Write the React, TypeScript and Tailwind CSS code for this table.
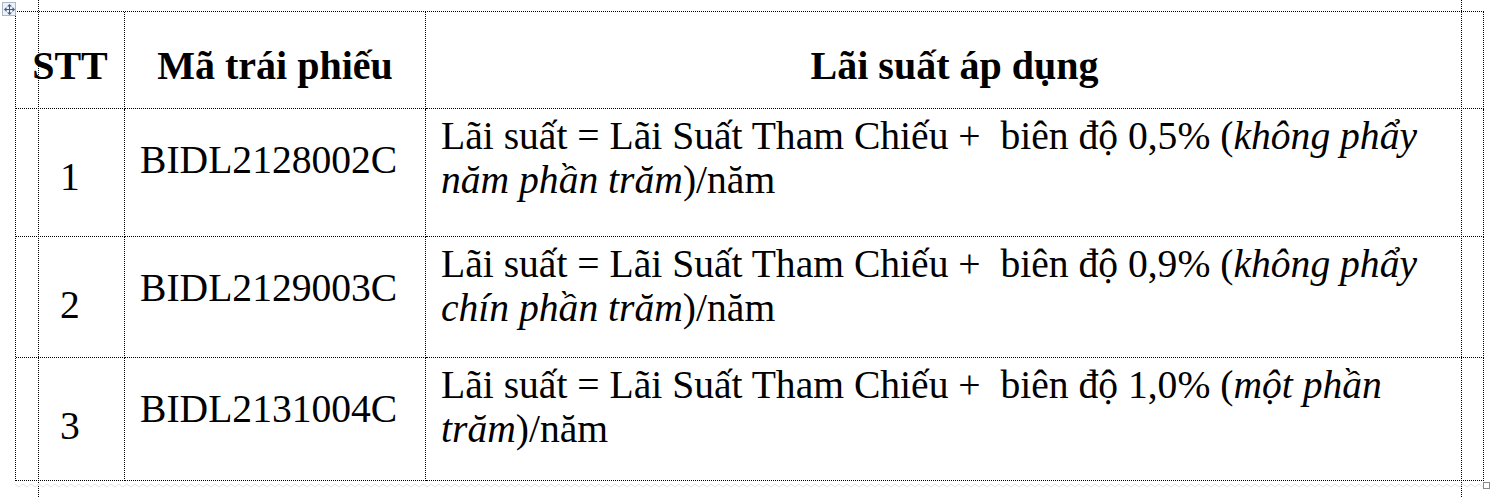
import React from 'react';

interface BondRow {
  stt: string;
  code: string;
  rowHeight: string;
  lines: React.ReactNode[];
}

const rows: BondRow[] = [
  {
    stt: '1',
    code: 'BIDL2128002C',
    rowHeight: 'h-[128px]',
    lines: [
      <>Lãi suất = Lãi Suất Tham Chiếu +  biên độ 0,5% (<i>không phẩy</i></>,
      <><i>năm phần trăm</i>)/năm</>,
    ],
  },
  {
    stt: '2',
    code: 'BIDL2129003C',
    rowHeight: 'h-[121px]',
    lines: [
      <>Lãi suất = Lãi Suất Tham Chiếu +  biên độ 0,9% (<i>không phẩy</i></>,
      <><i>chín phần trăm</i>)/năm</>,
    ],
  },
  {
    stt: '3',
    code: 'BIDL2131004C',
    rowHeight: 'h-[123px]',
    lines: [
      <>Lãi suất = Lãi Suất Tham Chiếu +  biên độ 1,0% (<i>một phần</i></>,
      <><i>trăm</i>)/năm</>,
    ],
  },
];

// Word's little "move table" handle in the top-left corner
const MoveHandle = () => (
  <div className="absolute left-[2px] top-[2px] w-[14px] h-[14px] border border-[#a9b6c8] bg-[#eef2f8] flex items-center justify-center">
    <svg width="11" height="11" viewBox="0 0 11 11" fill="#3a5a8c">
      <rect x="5" y="2" width="1" height="7" />
      <rect x="2" y="5" width="7" height="1" />
      <path d="M5.5 0 L8 2.5 L3 2.5 Z" />
      <path d="M5.5 11 L8 8.5 L3 8.5 Z" />
      <path d="M0 5.5 L2.5 3 L2.5 8 Z" />
      <path d="M11 5.5 L8.5 3 L8.5 8 Z" />
    </svg>
  </div>
);

const cell = 'border-r border-b border-dotted border-black';
const head = `${cell} h-[97px] pt-[32px] text-center font-bold text-[40px]`;

// squiggle points for the faint shadow line under the table
const squiggle = Array.from({ length: 368 }, (_, i) => `${i * 4},${i % 2 === 0 ? 1 : 4}`).join(' ');

export default function App() {
  return (
    <div className="relative w-[1498px] h-[497px] bg-white overflow-hidden text-black font-['Liberation_Serif','Times_New_Roman',serif]">
      <MoveHandle />

      <div className="ml-[15px] mt-[11px] w-[1469px] border-l border-t border-dotted border-black grid grid-cols-[109px_301px_1058px] text-[39.6px] leading-[44px]">
        <div className={head}>STT</div>
        <div className={head}>Mã trái phiếu</div>
        <div className={head}>Lãi suất áp dụng</div>

        {rows.map((row) => (
          <React.Fragment key={row.stt}>
            <div className={`${cell} ${row.rowHeight} pt-[46px] text-center`}>{row.stt}</div>
            <div className={`${cell} ${row.rowHeight} pt-[29px] pl-[15px]`}>{row.code}</div>
            <div className={`${cell} ${row.rowHeight} pt-[5px] pl-[15px]`}>
              {row.lines.map((line, i) => (
                <div key={i} className="whitespace-pre">{line}</div>
              ))}
            </div>
          </React.Fragment>
        ))}
      </div>

      {/* text boundary lines drawn over the page */}
      <div className="absolute left-[38px] top-0 h-full border-l border-dotted border-black" />
      <div className="absolute left-[1461px] top-0 h-full border-l border-dotted border-black" />

      {/* faint shadow squiggle under the table */}
      <svg className="absolute left-[15px] top-[483px]" width="1468" height="5">
        <polyline fill="none" stroke="#e3e3e3" strokeWidth="1" points={squiggle} />
      </svg>

      {/* resize handle */}
      <div className="absolute left-[1483px] top-[482px] w-[7px] h-[7px] border border-[#8a8a8a] bg-white" />
    </div>
  );
}
